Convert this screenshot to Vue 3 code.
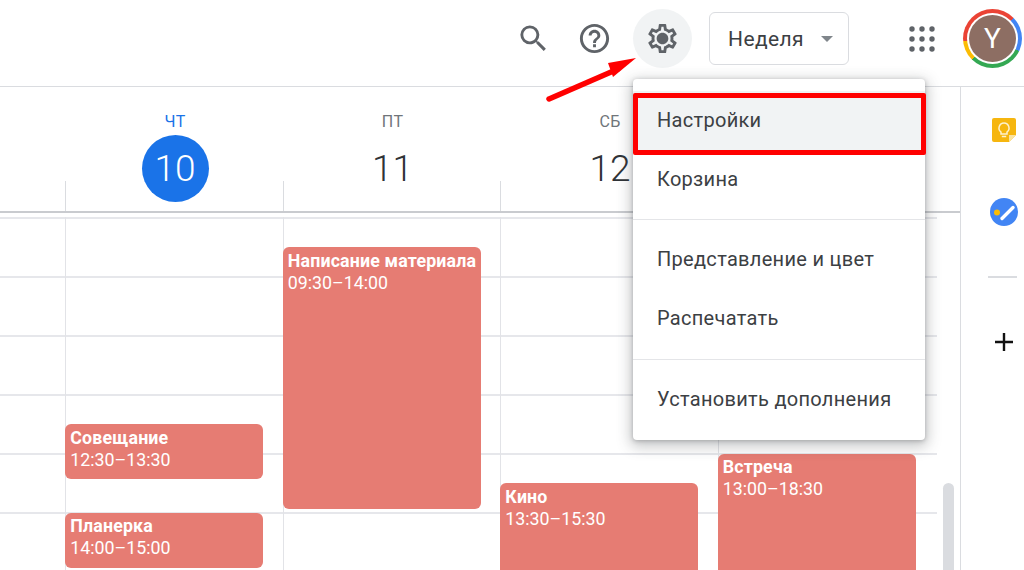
<template>
  <div class="page">
    <header class="topbar">
      <button class="icon-btn icon-btn--search" aria-label="Поиск">
        <svg viewBox="0 0 24 24" class="icon"><path d="M15.5 14h-.79l-.28-.27A6.471 6.471 0 0 0 16 9.5 6.5 6.5 0 1 0 9.5 16c1.61 0 3.09-.59 4.23-1.57l.27.28v.79l5 4.99L20.49 19l-4.99-5zm-6 0C7.01 14 5 11.99 5 9.5S7.01 5 9.5 5 14 7.01 14 9.5 11.99 14 9.5 14z" /></svg>
      </button>
      <button class="icon-btn" aria-label="Справка">
        <svg viewBox="0 0 24 24" class="icon"><path d="M11 18h2v-2h-2v2zm1-16C6.48 2 2 6.48 2 12s4.48 10 10 10 10-4.48 10-10S17.52 2 12 2zm0 18c-4.41 0-8-3.59-8-8s3.59-8 8-8 8 3.59 8 8-3.59 8-8 8zm0-14c-2.21 0-4 1.79-4 4h2c0-1.1.9-2 2-2s2 .9 2 2c0 2-3 1.75-3 5h2c0-2.25 3-2.5 3-5 0-2.21-1.79-4-4-4z" /></svg>
      </button>
      <button class="icon-btn icon-btn--active" aria-label="Настройки">
        <svg viewBox="0 0 24 24" class="icon"><path d="M19.43 12.98c.04-.32.07-.64.07-.98 0-.34-.03-.66-.07-.98l2.11-1.65c.19-.15.24-.42.12-.64l-2-3.46c-.09-.16-.26-.25-.44-.25-.06 0-.12.01-.17.03l-2.49 1c-.52-.4-1.08-.73-1.69-.98l-.38-2.65C14.46 2.18 14.25 2 14 2h-4c-.25 0-.46.18-.49.42l-.38 2.65c-.61.25-1.17.59-1.69.98l-2.49-1c-.06-.02-.12-.03-.18-.03-.17 0-.34.09-.43.25l-2 3.46c-.13.22-.07.49.12.64l2.11 1.65c-.04.32-.07.65-.07.98 0 .33.03.66.07.98l-2.11 1.65c-.19.15-.24.42-.12.64l2 3.46c.09.16.26.25.44.25.06 0 .12-.01.17-.03l2.49-1c.52.4 1.08.73 1.69.98l.38 2.65c.03.24.24.42.49.42h4c.25 0 .46-.18.49-.42l.38-2.65c.61-.25 1.17-.59 1.69-.98l2.49 1c.06.02.12.03.18.03.17 0 .34-.09.43-.25l2-3.46c.12-.22.07-.49-.12-.64l-2.11-1.65zm-1.98-1.71c.04.31.05.52.05.73 0 .21-.02.43-.05.73l-.14 1.13.89.7 1.08.84-.7 1.21-1.27-.51-1.04-.42-.9.68c-.43.32-.84.56-1.25.73l-1.06.43-.16 1.13-.2 1.35h-1.4l-.19-1.35-.16-1.13-1.06-.43c-.43-.18-.83-.41-1.23-.71l-.91-.7-1.06.43-1.27.51-.7-1.21 1.08-.84.89-.7-.14-1.13c-.03-.31-.05-.54-.05-.74s.02-.43.05-.73l.14-1.13-.89-.7-1.08-.84.7-1.21 1.27.51 1.04.42.9-.68c.43-.32.84-.56 1.25-.73l1.06-.43.16-1.13.2-1.35h1.39l.19 1.35.16 1.13 1.06.43c.43.18.83.41 1.23.71l.91.7 1.06-.43 1.27-.51.7 1.21-1.07.85-.89.7.14 1.13zM12 8c-2.21 0-4 1.79-4 4s1.79 4 4 4 4-1.79 4-4-1.79-4-4-4z" /></svg>
      </button>
      <button class="view-btn">
        <span>Неделя</span>
        <i class="caret"></i>
      </button>
      <button class="icon-btn apps" aria-label="Приложения">
        <svg viewBox="0 0 26 26" class="apps__icon">
          <template v-for="y in [3, 13, 23]" :key="y">
            <circle v-for="x in [3, 13, 23]" :key="x" :cx="x" :cy="y" r="2.7" />
          </template>
        </svg>
      </button>
      <div class="avatar">
        <div class="avatar__inner">Y</div>
      </div>
    </header>

    <div class="main">
      <section class="calendar">
        <div class="days">
          <div class="days__gutter"></div>
          <div v-for="day in days" :key="day.num" class="day">
            <span class="day__label" :class="{ 'day__label--today': day.today }">{{ day.label }}</span>
            <span class="day__num" :class="{ 'day__num--today': day.today }">{{ day.num }}</span>
          </div>
        </div>

        <div class="grid">
          <div class="grid__gutter"></div>
          <div v-for="day in days" :key="day.num" class="col">
            <article
              v-for="ev in day.events"
              :key="ev.title"
              class="event"
              :style="eventStyle(ev)"
            >
              <strong>{{ ev.title }}</strong>
              <span>{{ ev.time }}</span>
            </article>
          </div>
          <div class="scrollbar"></div>
        </div>
      </section>

      <aside class="rail">
        <svg class="rail__keep" viewBox="0 0 24 24">
          <path d="M2 0h20a2 2 0 0 1 2 2v15l-7 7H2a2 2 0 0 1-2-2V2a2 2 0 0 1 2-2z" fill="#f6b60f" />
          <path d="M24 17h-7v7z" fill="#fbe4a0" />
          <path d="M12 5a5 5 0 0 0-3 9v2h6v-2a5 5 0 0 0-3-9zM9.8 18.5h4.4" fill="none" stroke="#fdf1cf" stroke-width="1.5" />
        </svg>
        <svg class="rail__tasks" viewBox="0 0 28 28">
          <circle cx="14" cy="14" r="14" fill="#4285f4" />
          <path d="M12 20.5 23 9.5" stroke="#fff" stroke-width="3.4" stroke-linecap="round" />
          <circle cx="7" cy="14.5" r="3" fill="#fbbc04" />
        </svg>
        <div class="rail__sep"></div>
        <svg class="rail__plus" viewBox="0 0 18 18">
          <path d="M9 0v18M0 9h18" stroke="#111" stroke-width="2.4" />
        </svg>
      </aside>
    </div>

    <nav class="menu">
      <div class="menu__group">
        <a class="menu__item menu__item--hover">Настройки</a>
        <a class="menu__item">Корзина</a>
      </div>
      <div class="menu__group">
        <a class="menu__item">Представление и цвет</a>
        <a class="menu__item">Распечатать</a>
      </div>
      <div class="menu__group">
        <a class="menu__item">Установить дополнения</a>
      </div>
    </nav>

    <!-- annotation on top of the screenshot -->
    <div class="highlight"></div>
    <svg class="arrow" viewBox="0 0 100 60">
      <path d="M3 47 72 17" stroke="#ff0000" stroke-width="5.5" stroke-linecap="round" />
      <path d="M90 6 62 11 67 25z" fill="#ff0000" />
    </svg>
  </div>
</template>

<script setup>
const HOUR = 59

const days = [
  {
    label: 'ЧТ',
    num: 10,
    today: true,
    events: [
      { title: 'Совещание', time: '12:30–13:30', start: 12.5, end: 13.5 },
      { title: 'Планерка', time: '14:00–15:00', start: 14, end: 15 },
    ],
  },
  {
    label: 'ПТ',
    num: 11,
    events: [
      { title: 'Написание материала', time: '09:30–14:00', start: 9.5, end: 14 },
    ],
  },
  {
    label: 'СБ',
    num: 12,
    events: [
      { title: 'Кино', time: '13:30–15:30', start: 13.5, end: 15.5 },
    ],
  },
  {
    label: 'ВС',
    num: 13,
    events: [
      { title: 'Встреча', time: '13:00–18:30', start: 13, end: 18.5 },
    ],
  },
]

// the grid starts at 09:00
function eventStyle(ev) {
  return {
    top: (ev.start - 9) * HOUR + 0.5 + 'px',
    height: (ev.end - ev.start) * HOUR - 4 + 'px',
  }
}
</script>

<style>
html,
body {
  margin: 0;
  background: #fff;
}
</style>

<style scoped>
.page {
  position: relative;
  width: 1024px;
  height: 570px;
  overflow: hidden;
  background: #fff;
  font-family: Roboto, "Liberation Sans", sans-serif;
  color: #3c4043;
}

button {
  border: 0;
  padding: 0;
  background: none;
  font: inherit;
  color: inherit;
}

/* Top bar */
.topbar {
  height: 86px;
  box-sizing: content-box;
  border-bottom: 1px solid #dadce0;
  display: flex;
  align-items: center;
  justify-content: flex-end;
  padding-right: 2px;
}

.icon-btn {
  width: 59px;
  height: 59px;
  margin-top: -9px;
  border-radius: 50%;
  display: flex;
  align-items: center;
  justify-content: center;
  margin-right: 3px;
}

.icon-btn--search {
  margin-right: 2px;
}

.icon-btn--active {
  background: #f1f3f4;
  margin-left: 6px;
  margin-right: 17px;
}

.icon {
  width: 35px;
  height: 35px;
  fill: #5f6368;
}

.view-btn {
  width: 140px;
  height: 53px;
  margin-top: -9px;
  margin-right: 43px;
  box-sizing: border-box;
  border: 1.5px solid #dadce0;
  border-radius: 6px;
  display: flex;
  align-items: center;
  padding-left: 18px;
  font-size: 21px;
  letter-spacing: 0.4px;
  color: #3c4043;
}

.caret {
  margin-left: 17px;
  width: 0;
  height: 0;
  border-left: 6.5px solid transparent;
  border-right: 6.5px solid transparent;
  border-top: 6.5px solid #80868b;
}

.apps {
  margin-right: 12px;
}

.apps__icon {
  width: 26px;
  height: 26px;
  fill: #5f6368;
}

.avatar {
  width: 59px;
  height: 59px;
  margin-top: -9px;
  border-radius: 50%;
  background: conic-gradient(from -45deg, #ea4335 0 90deg, #4285f4 90deg 160deg, #34a853 160deg 270deg, #fbbc04 270deg 310deg, #ea4335 310deg);
  display: flex;
  align-items: center;
  justify-content: center;
  position: relative;
}

.avatar::before {
  content: "";
  position: absolute;
  inset: 4px;
  border-radius: 50%;
  background: #fff;
}

.avatar__inner {
  position: relative;
  width: 47px;
  height: 47px;
  border-radius: 50%;
  background: #8d6e63;
  color: #fff;
  font-size: 28px;
  line-height: 47px;
  text-align: center;
}

/* Calendar */
.main {
  display: flex;
  height: 483px;
}

.calendar {
  width: 960px;
  display: flex;
  flex-direction: column;
}

.days {
  height: 124px;
  flex: none;
  display: grid;
  grid-template-columns: 66.3px repeat(4, 217.5px);
  border-bottom: 2px solid #c9cbcf;
}

.day {
  position: relative;
  display: flex;
  flex-direction: column;
  align-items: center;
  padding-top: 26px;
}

.day::before {
  content: "";
  position: absolute;
  left: -1px;
  bottom: 0;
  height: 30px;
  width: 1px;
  background: #dadce0;
}

.day__label {
  font-size: 16px;
  line-height: 18px;
  color: #70757a;
  letter-spacing: 0.4px;
}

.day__label--today {
  color: #1a73e8;
}

.day__num {
  width: 67px;
  height: 67px;
  margin-top: 4px;
  border-radius: 50%;
  font-size: 37px;
  font-weight: 300;
  line-height: 67px;
  text-align: center;
  color: #2f3337;
}

.day__num--today {
  background: #1a73e8;
  color: #fff;
}

.grid {
  position: relative;
  flex: 1;
  margin-top: 4px;
  display: grid;
  grid-template-columns: 66.3px repeat(4, 217.5px) 1fr;
  background-image: repeating-linear-gradient(to bottom, #e6e7eb 0 2px, transparent 2px 59px);
  background-size: 937px 100%;
  background-repeat: no-repeat;
}

.col {
  position: relative;
  border-left: 1.5px solid #e2e3e7;
  margin-left: -1px;
}

.event {
  position: absolute;
  left: -1px;
  width: 198px;
  box-sizing: border-box;
  padding: 2.5px 5px;
  border-radius: 6px;
  background: #e67c73;
  color: #fff;
  font-size: 17.8px;
  line-height: 22px;
  overflow: hidden;
  white-space: nowrap;
}

.event strong,
.event span {
  display: block;
}

.event strong {
  font-weight: 700;
  letter-spacing: 0.16px;
}

.scrollbar {
  position: absolute;
  left: 943px;
  top: 266px;
  bottom: -10px;
  width: 11px;
  border-radius: 6px;
  background: #dadce0;
}

/* Side rail */
.rail {
  flex: 1;
  box-sizing: border-box;
  border-left: 1.5px solid #dadce0;
  display: flex;
  flex-direction: column;
  align-items: center;
  padding: 31px 0 0 23px;
}

.rail__keep {
  width: 24px;
  height: 24px;
}

.rail__tasks {
  width: 28px;
  height: 28px;
  margin-top: 56px;
}

.rail__sep {
  width: 29px;
  height: 1.5px;
  margin-top: 50px;
  margin-right: 4px;
  background: #dadce0;
}

.rail__plus {
  width: 18px;
  height: 18px;
  margin-top: 55px;
}

/* Dropdown menu, over the grid */
.menu {
  position: absolute;
  left: 633px;
  top: 79px;
  width: 292px;
  height: 361px;
  box-sizing: border-box;
  background: #fff;
  border-radius: 4px;
  box-shadow: 0 4px 14px 3px rgba(60, 64, 67, 0.28), 0 1px 4px rgba(60, 64, 67, 0.3);
  padding-top: 11.5px;
}

.menu__group {
  padding-bottom: 10.5px;
  margin-bottom: 10px;
  border-bottom: 1.5px solid #e4e5e8;
}

.menu__group:last-child {
  border-bottom: 0;
  margin-bottom: 0;
}

.menu__item {
  display: block;
  height: 59px;
  line-height: 59px;
  padding-left: 24px;
  font-size: 20px;
  letter-spacing: 0.3px;
  color: #3c4043;
}

.menu__item--hover {
  background: #f1f3f4;
}

.highlight {
  position: absolute;
  left: 633px;
  top: 93px;
  width: 293px;
  height: 62px;
  box-sizing: border-box;
  border: 5px solid #ff0000;
  border-radius: 2px;
}

.arrow {
  position: absolute;
  left: 546px;
  top: 52px;
  width: 100px;
  height: 60px;
}
</style>
